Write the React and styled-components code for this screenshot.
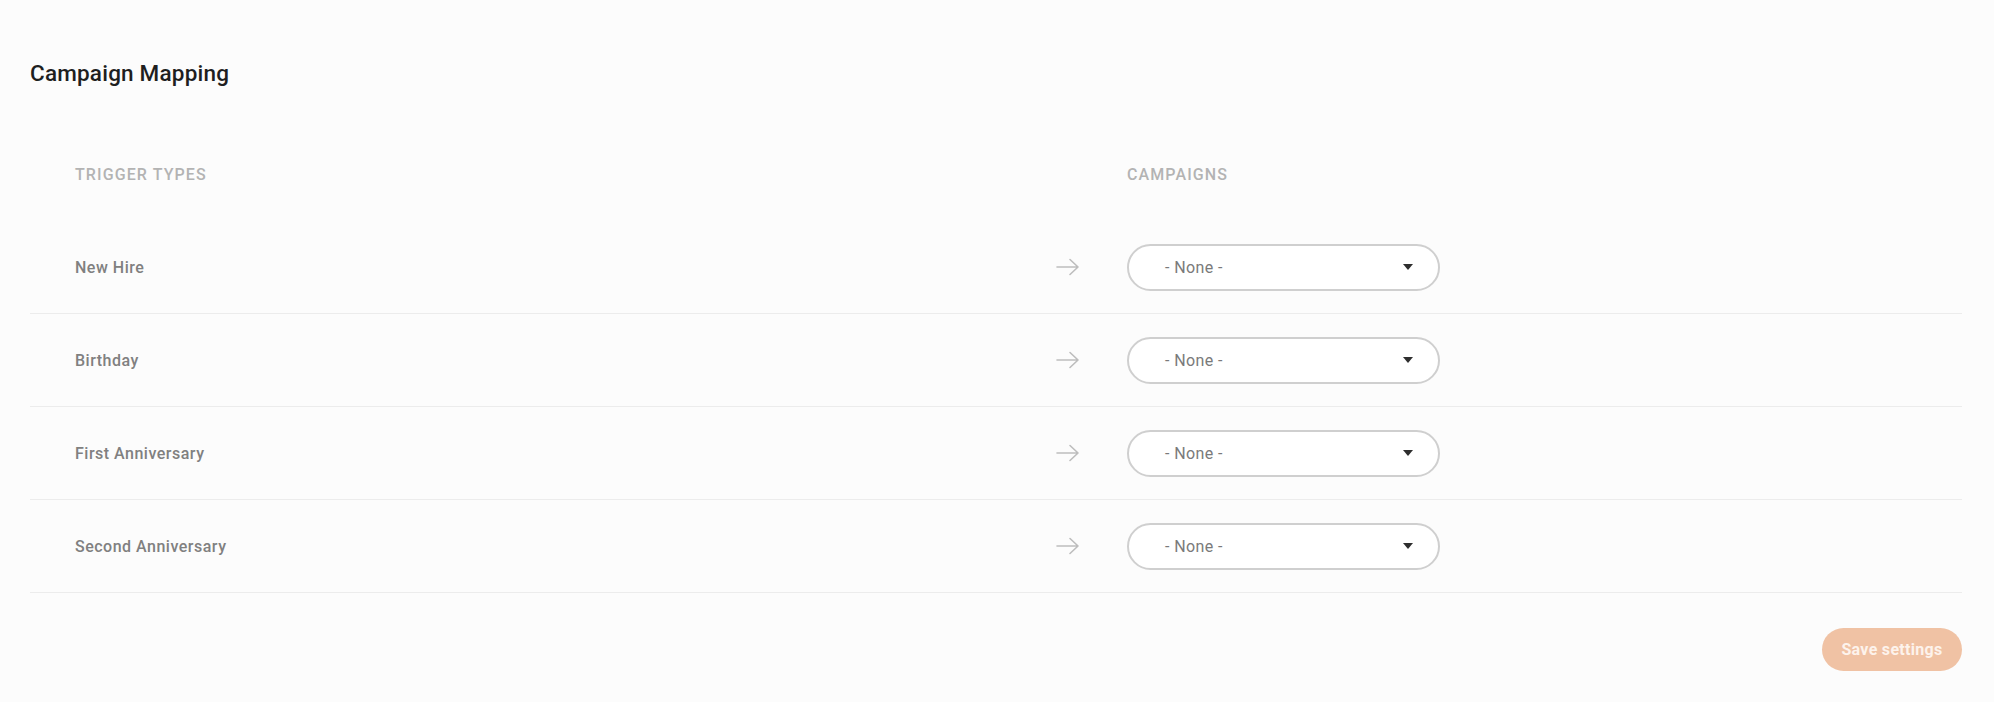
import React from "react";
import styled, { createGlobalStyle } from "styled-components";

const triggers = ["New Hire", "Birthday", "First Anniversary", "Second Anniversary"];

const GlobalStyle = createGlobalStyle`
  body {
    margin: 0;
    background: #fcfcfc;
    font-family: Roboto, "Liberation Sans", sans-serif;
  }
`;

const Page = styled.div`
  padding: 60px 32px 0 30px;
`;

const Title = styled.h2`
  margin: 0;
  font-size: 22.5px;
  line-height: 26px;
  font-weight: 500;
  letter-spacing: 0.2px;
  color: #1f1f1f;
`;

const Table = styled.div`
  margin-top: 42px;
`;

const Row = styled.div`
  display: grid;
  grid-template-columns: 980px 72px 313px 1fr;
  align-items: center;
  height: ${(p) => (p.$head ? "93px" : "92px")};
  padding-left: 45px;
  border-bottom: ${(p) => (p.$head ? "none" : "1px solid #ececec")};
`;

const HeadCell = styled.div`
  grid-column: ${(p) => p.$col};
  font-size: 16px;
  font-weight: 500;
  letter-spacing: 1.1px;
  color: #b3b3b3;
  text-transform: uppercase;
`;

const Label = styled.div`
  font-size: 16px;
  font-weight: 500;
  letter-spacing: 0.5px;
  color: #808080;
`;

const Arrow = styled.svg`
  width: 26px;
  height: 18px;
  display: block;
`;

const Select = styled.div`
  height: 47px;
  box-sizing: border-box;
  border: 2px solid #cfcfcf;
  border-radius: 24px;
  background: #ffffff;
  display: flex;
  align-items: center;
  justify-content: space-between;
  padding: 0 25px 0 36px;
  font-size: 16px;
  letter-spacing: 0.4px;
  color: #7a7a7a;
`;

const Caret = styled.span`
  width: 0;
  height: 0;
  border-left: 5.5px solid transparent;
  border-right: 5.5px solid transparent;
  border-top: 6px solid #2e2e2e;
`;

const Footer = styled.div`
  display: flex;
  justify-content: flex-end;
  padding-top: 35px;
`;

const SaveButton = styled.button`
  width: 140px;
  height: 43px;
  border: none;
  border-radius: 22px;
  background: #f0c2a4;
  color: #fdf3ec;
  font-family: Roboto, "Liberation Sans", sans-serif;
  font-size: 16px;
  font-weight: 700;
  letter-spacing: 0.3px;
  cursor: pointer;
`;

const ArrowIcon = () => (
  <Arrow viewBox="0 0 26 18" fill="none" stroke="#bdbdbd" strokeWidth="1.6" strokeLinecap="round" strokeLinejoin="round">
    <path d="M2 9h21M15 1.5L23 9l-8 7.5" />
  </Arrow>
);

export default function App() {
  return (
    <>
      <GlobalStyle />
      <Page>
        <Title>Campaign Mapping</Title>
        <Table>
          <Row $head>
            <HeadCell $col={1}>Trigger Types</HeadCell>
            <HeadCell $col={3}>Campaigns</HeadCell>
          </Row>
          {triggers.map((t) => (
            <Row key={t}>
              <Label>{t}</Label>
              <ArrowIcon />
              <Select>
                <span>- None -</span>
                <Caret />
              </Select>
            </Row>
          ))}
        </Table>
        <Footer>
          <SaveButton>Save settings</SaveButton>
        </Footer>
      </Page>
    </>
  );
}
